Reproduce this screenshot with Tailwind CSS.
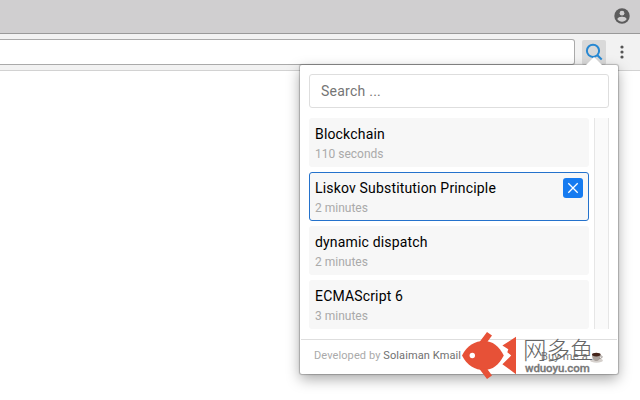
<!DOCTYPE html>
<html lang="en">
<head>
    <meta charset="UTF-8">
    <title>Search</title>
    <script src="https://cdn.jsdelivr.net/npm/@tailwindcss/browser@4"></script>
</head>
<body class="relative w-[640px] h-[400px] overflow-hidden bg-white font-['Roboto','Noto_Sans_CJK_SC',sans-serif]">
    <!-- Title bar -->
    <header class="flex h-[34px] items-center justify-end bg-[#d0cfd0] border-b border-[#999] pr-[10px] pb-px">
        <svg class="w-4 h-4" viewBox="0 0 16 16">
            <circle cx="8" cy="8" r="7.7" fill="#5c5c5c" />
            <circle cx="8" cy="5.2" r="2.4" fill="#d0cfd0" />
            <path d="M3.4 11.2C3.4 9.4 6.2 8.7 8 8.7s4.6.7 4.6 2.5C11.6 12.8 9.9 13.7 8 13.7s-3.6-.9-4.6-2.5z" fill="#d0cfd0" />
        </svg>
    </header>

    <!-- Toolbar -->
    <div class="flex h-[37px] bg-[#f2f2f2] border-b border-[#d2d2d2] pt-[5px]">
        <div class="w-[575px] h-[26px] bg-white border border-l-0 border-[#aaa] rounded-r-[3px]"></div>
        <div class="ml-[7px] mt-px w-6 h-[25px] bg-[#d9d9d9] rounded-[2px]">
            <svg class="w-6 h-6" viewBox="0 0 24 24" fill="none" stroke="#2788d2" stroke-width="2">
                <circle cx="11" cy="10.8" r="6.1" />
                <path d="M15.4 15.2l4.3 4.3" />
            </svg>
        </div>
        <svg class="ml-[12px] mt-[5px] w-2 h-4" viewBox="0 0 8 16" fill="#555">
            <circle cx="4" cy="3" r="1.6" />
            <circle cx="4" cy="8" r="1.6" />
            <circle cx="4" cy="13" r="1.6" />
        </svg>
    </div>

    <!-- Extension popup -->
    <main class="absolute left-[300px] top-[65px] w-[318px] h-[309px] bg-white rounded-[2px] shadow-[0_0_1px_1px_rgba(0,0,0,0.22),0_5px_14px_rgba(0,0,0,0.34)] flex flex-col">
        <svg class="absolute left-[285px] -top-[8px] w-[18px] h-[9px]" viewBox="0 0 18 9">
            <path d="M0 9L9 0l9 9z" fill="#fff" />
        </svg>

        <div class="mx-[9px] mt-[9px] h-[34px] flex items-center border border-[#dedede] rounded-[3px] px-[11px] text-[14px] tracking-[0.25px] text-[#757575]">Search ...</div>

        <div class="mx-[9px] mt-[10px] h-[211px] flex justify-between">
            <ul class="w-[280px] flex flex-col gap-[5px]">
                <li class="h-[49px] bg-[#f7f7f7] rounded-[3px] px-[6px] pt-[6px]">
                    <p class="text-[14px] leading-5 tracking-[0.17px] text-black">Blockchain</p>
                    <p class="text-[12px] leading-5 text-[#aaa]">110 seconds</p>
                </li>
                <li class="h-[49px] bg-[#f7f7f7] rounded-[3px] border border-[#2472cc] px-[5px] pt-[5px] flex justify-between">
                    <div>
                        <p class="text-[14px] leading-5 tracking-[0.17px] text-black">Liskov Substitution Principle</p>
                        <p class="text-[12px] leading-5 text-[#aaa]">2 minutes</p>
                    </div>
                    <button class="w-5 h-5 bg-[#167bf0] rounded-[3px]">
                        <svg class="w-5 h-5" viewBox="0 0 20 20" fill="none" stroke="#fff" stroke-width="1.3">
                            <path d="M5.3 5.3l9.4 9.4M14.7 5.3l-9.4 9.4" />
                        </svg>
                    </button>
                </li>
                <li class="h-[49px] bg-[#f7f7f7] rounded-[3px] px-[6px] pt-[6px]">
                    <p class="text-[14px] leading-5 tracking-[0.17px] text-black">dynamic dispatch</p>
                    <p class="text-[12px] leading-5 text-[#aaa]">2 minutes</p>
                </li>
                <li class="h-[49px] bg-[#f7f7f7] rounded-[3px] px-[6px] pt-[6px]">
                    <p class="text-[14px] leading-5 tracking-[0.17px] text-black">ECMAScript 6</p>
                    <p class="text-[12px] leading-5 text-[#aaa]">3 minutes</p>
                </li>
            </ul>
            <!-- Scrollbar track -->
            <div class="w-[15px] bg-[#fafafa] border-x border-[#e6e6e6]"></div>
        </div>

        <footer class="mt-[10px] mx-px h-[34px] border-t border-[#dedede] flex items-center justify-between pl-[13px] pr-[13px] pb-px text-[11px] tracking-[0.1px] text-[#aaa] whitespace-nowrap">
            <p>Developed by <span class="text-[#707070]">Solaiman Kmail</span></p>
            <p class="flex items-center gap-[2px] pt-[3px] tracking-[0.25px] text-[#777]">Buy me a
                <svg class="w-[14px] h-[11px]" viewBox="0 0 14 11">
                    <ellipse cx="6.5" cy="8.4" rx="6.3" ry="2.3" fill="#d5d0cc" />
                    <path d="M2 2.5h8.5c0 4-1.5 6.5-4.2 6.5S2 6.5 2 2.5z" fill="#aaa29d" />
                    <path d="M10 4c3-.8 3 2.5-.8 2.6" fill="none" stroke="#948b85" />
                    <ellipse cx="6.3" cy="2.6" rx="4.3" ry="1.8" fill="#44251b" />
                </svg>
            </p>
        </footer>
    </main>

    <!-- Watermark -->
    <div class="absolute left-[461px] top-[331px] flex">
        <svg class="w-[56px] h-[49px]" viewBox="0 0 56 49" fill="#e75137">
            <path d="M1 24.5C6 14.5 14 10 23 10c8.5 0 15 5 19.8 14.5C38 34 31.5 39 23 39 14 39 6 34.5 1 24.5z" />
            <path d="M18.5 11L26 1l5 3.5-5.5 7.5zM18.5 38l7.5 10 5-3.5-5.5-7.5z" />
            <path d="M41.4 14.5L55 5.8v37.4L41.4 33.2l8.8-8.7-3.9-3.2 1-3.1z" />
            <circle cx="11.3" cy="24.5" r="2.7" fill="#fff" />
        </svg>
        <div class="ml-[6px] pt-[6px] text-[#777] whitespace-nowrap">
            <p class="text-[23.5px] leading-[24px] font-light text-[#666] font-['Noto_Sans_CJK_SC',sans-serif]">网多鱼</p>
            <p class="ml-[2px] text-[11.5px] leading-[15px] tracking-[-0.1px] font-medium [-webkit-text-stroke:0.3px_#777] font-['Roboto',sans-serif]">wduoyu.com</p>
        </div>
    </div>
</body>
</html>
